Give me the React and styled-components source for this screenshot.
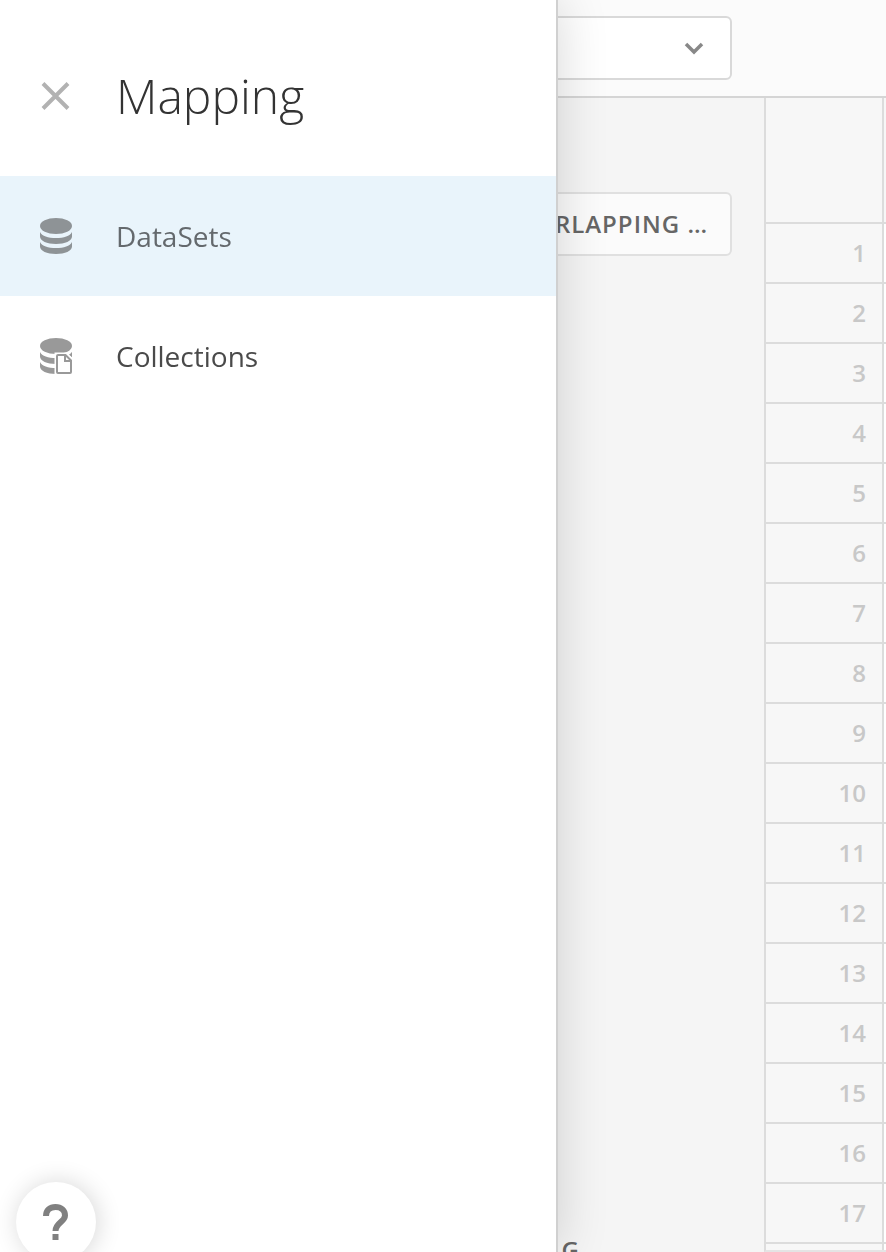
import React from "react";
import styled, { createGlobalStyle } from "styled-components";

const GlobalStyle = createGlobalStyle`
  *, *::before, *::after { box-sizing: border-box; }
  body {
    margin: 0;
    overflow: hidden;
    font-family: "Open Sans", "Liberation Sans", sans-serif;
    color: #4a4a4a;
    background: #f5f5f5;
  }
  button, select { font: inherit; color: inherit; }
`;

const Page = styled.div`
  display: flex;
  flex-direction: column;
  height: 100vh;
  overflow: hidden;
`;

const TopBar = styled.header`
  flex: none;
  padding: 16px 32px;
  background: #fbfbfb;
  border-bottom: 2px solid #d5d5d5;
`;

const SelectBox = styled.div`
  display: flex;
  align-items: center;
  width: 700px;
  height: 64px;
  padding-right: 26px;
  background: #fff;
  border: 2px solid #d9d9d9;
  border-radius: 6px;
`;

const Select = styled.select`
  flex: 1;
  height: 60px;
  border: 0;
  outline: 0;
  background: transparent;
  appearance: none;
`;

const Body = styled.main`
  display: flex;
  flex: 1;
  min-height: 0;
`;

const SidePanel = styled.section`
  display: flex;
  flex: none;
  flex-direction: column;
  width: 764px;
  padding: 94px 32px 0;
  background: #f5f5f5;
`;

const OutlineButton = styled.button`
  flex: none;
  height: 64px;
  padding: 0 22px 2px;
  text-align: right;
  font-size: 24px;
  font-weight: 600;
  letter-spacing: 1px;
  color: #666;
  background: #fbfbfb;
  border: 2px solid #e0e0e0;
  border-radius: 6px;
`;

const PanelContent = styled.div`
  flex: 1;
`;

const PanelFooter = styled.footer`
  flex: none;
  height: 20px;
  padding-right: 152px;
  overflow: hidden;
  text-align: right;
  font-size: 24px;
  font-weight: 600;
  line-height: 36px;
  letter-spacing: 1px;
  color: #666;
`;

const GridPane = styled.section`
  flex: 1;
  min-width: 0;
  overflow: hidden;
  border-left: 2px solid #dcdcdc;
  border-bottom: 2px solid #e4e4e4;
`;

const Grid = styled.table`
  width: 100%;
  table-layout: fixed;
  border-collapse: separate;
  border-spacing: 0;
`;

const HeadCell = styled.th`
  width: ${(p) => (p.$index ? "118px" : "auto")};
  height: 126px;
  padding: 0;
  background: #f7f7f7;
  border-bottom: 2px solid #dcdcdc;
  border-right: ${(p) => (p.$index ? "2px solid #dcdcdc" : "0")};
`;

const IndexCell = styled.th`
  height: 60px;
  padding: 0 16px 0 0;
  text-align: right;
  font-size: 24px;
  font-weight: 600;
  line-height: 32px;
  color: #c8c8c8;
  background: #f7f7f7;
  border-right: 2px solid #dcdcdc;
  border-bottom: 2px solid #dcdcdc;
`;

const DataCell = styled.td`
  padding: 0;
  background: #fff;
  border-bottom: 2px solid #dcdcdc;
`;

const Drawer = styled.aside`
  position: fixed;
  top: 0;
  bottom: 0;
  left: 0;
  width: 558px;
  max-width: 100%;
  background: #fff;
  border-right: 2px solid #d0d0d0;
  box-shadow: 0 0 48px rgba(0, 0, 0, 0.16);
`;

const DrawerHeader = styled.div`
  display: flex;
  align-items: center;
  gap: 44px;
  height: 176px;
  padding: 16px 40px 0;
`;

const IconButton = styled.button`
  display: flex;
  align-items: center;
  width: 32px;
  height: 32px;
  padding: 0;
  border: 0;
  background: none;
`;

const Title = styled.h1`
  margin: 0;
  font-size: 48px;
  font-weight: 300;
  line-height: 64px;
  color: #333;
`;

const NavLink = styled.a`
  display: flex;
  align-items: center;
  gap: 44px;
  height: 120px;
  padding: 0 40px;
  font-size: 28px;
  line-height: 40px;
  text-decoration: none;
  color: ${(p) => (p.$active ? "#64696d" : "#4a4a4a")};
  background: ${(p) => (p.$active ? "#e9f4fb" : "transparent")};
`;

const HelpButton = styled.button`
  position: fixed;
  left: 16px;
  bottom: -10px;
  display: flex;
  align-items: center;
  justify-content: center;
  width: 80px;
  height: 80px;
  padding: 0;
  background: #fff;
  border: 0;
  border-radius: 50%;
  box-shadow: 2px 0 24px rgba(0, 0, 0, 0.16);
`;

const CloseIcon = () => (
  <svg width="32" height="32" viewBox="0 0 32 32" fill="none" stroke="#b2b2b2" strokeWidth="4" aria-hidden="true">
    <path d="M3 3.500L28 28.500M28 3.500L3 28.500" />
  </svg>
);

const Stack = ({ fill }) => (
  <g fill={fill}>
    <ellipse cx="16" cy="8" rx="16" ry="8" />
    <path d="M0 14C2 18 8 20 16 20S30 18 32 14V18.500C32 23 25 26 16 26S0 23 0 18.500Z" />
    <path d="M0 24C2 28 8 30 16 30S30 28 32 24V28.500C32 33 25 36 16 36S0 33 0 28.500Z" />
  </g>
);

const DataSetsIcon = () => (
  <svg width="32" height="36" viewBox="0 0 32 36" aria-hidden="true">
    <Stack fill="#8e9396" />
  </svg>
);

const CollectionsIcon = () => (
  <svg width="32" height="36" viewBox="0 0 32 36" aria-hidden="true">
    <Stack fill="#999" />
    <path d="M14.500 14.500H27L32 19V36H14.500Z" fill="#fff" />
    <path d="M29 16.500C30.500 15.800 31.500 15 32 14V19Z" fill="#999" />
    <path d="M18 17H25.500L31 22.500V34Q31 35 30 35H18Q17 35 17 34V18Q17 17 18 17ZM25 17V23H31" fill="#fff" stroke="#999" strokeWidth="2" />
  </svg>
);

const ChevronIcon = () => (
  <svg width="20" height="14" viewBox="0 0 20 14" fill="none" stroke="#888" strokeWidth="3.500" aria-hidden="true">
    <path d="M2 3L10 11L18 3" />
  </svg>
);

const HelpIcon = () => (
  <svg width="26" height="36" viewBox="0 0 26 36" aria-hidden="true">
    <path d="M3 12C3 6 7 3 12.500 3S22 6 22 11.500C22 18 12.500 18.500 12.500 27" fill="none" stroke="#808080" strokeWidth="6" />
    <path d="M9.500 30H15.500V36H9.500Z" fill="#808080" />
  </svg>
);

const rows = Array.from({ length: 17 }, (_, i) => i + 1);

export default function App() {
  return (
    <>
      <GlobalStyle />
      <Page>
        <TopBar>
          <SelectBox>
            <Select aria-label="Source" />
            <ChevronIcon />
          </SelectBox>
        </TopBar>
        <Body>
          <SidePanel>
            <OutlineButton type="button">OVERLAPPING …</OutlineButton>
            <PanelContent />
            <PanelFooter>G</PanelFooter>
          </SidePanel>
          <GridPane>
            <Grid>
              <thead>
                <tr>
                  <HeadCell $index />
                  <HeadCell />
                </tr>
              </thead>
              <tbody>
                {rows.map((n) => (
                  <tr key={n}>
                    <IndexCell scope="row">{n}</IndexCell>
                    <DataCell />
                  </tr>
                ))}
                <tr>
                  <IndexCell scope="row" />
                  <DataCell />
                </tr>
              </tbody>
            </Grid>
          </GridPane>
        </Body>
      </Page>
      <Drawer>
        <DrawerHeader>
          <IconButton type="button" aria-label="Close">
            <CloseIcon />
          </IconButton>
          <Title>Mapping</Title>
        </DrawerHeader>
        <nav>
          <NavLink href="#datasets" $active aria-current="page">
            <DataSetsIcon />
            DataSets
          </NavLink>
          <NavLink href="#collections">
            <CollectionsIcon />
            Collections
          </NavLink>
        </nav>
      </Drawer>
      <HelpButton type="button" aria-label="Help">
        <HelpIcon />
      </HelpButton>
    </>
  );
}
